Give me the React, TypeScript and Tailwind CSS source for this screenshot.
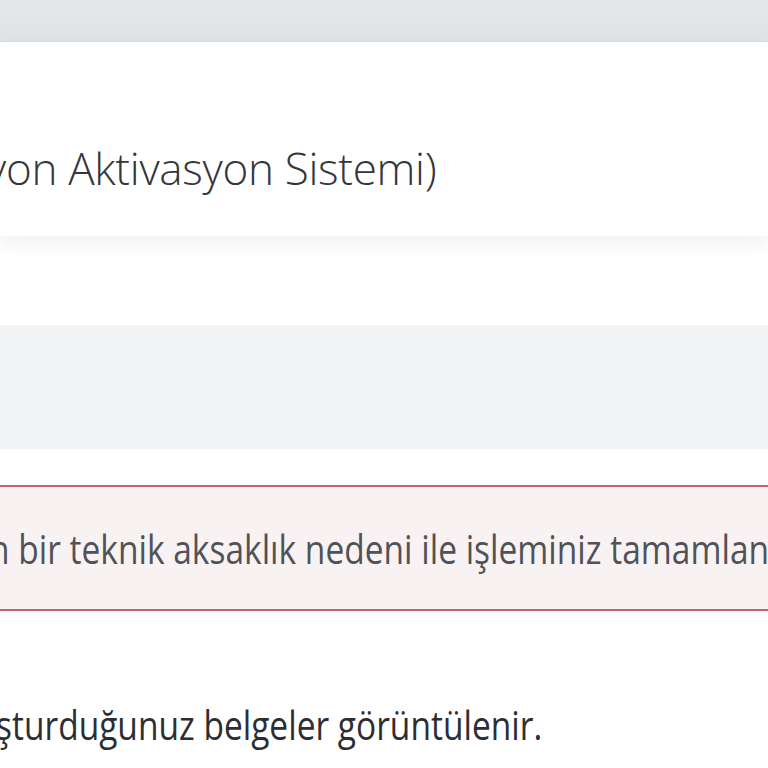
import React from 'react';

// Sayfanın kırpılmış görünümü: üst bar, başlık paneli, gri alan, hata kutusu, açıklama
export default function App() {
  return (
    <div className="w-[768px] h-[768px] overflow-hidden bg-white" style={{ fontFamily: '"Open Sans", "Noto Sans", sans-serif' }}>
      <div className="h-[42px] bg-gradient-to-b from-[#e6e9ec] to-[#dde1e4] border-b border-[#d6dadd]" />

      <div className="h-[194px] bg-white shadow-[0_10px_18px_rgba(0,0,0,0.05)] pt-[93px]">
        <h1 className="ml-[-14px] whitespace-nowrap text-[44px] leading-[66px] font-light text-[#33363b] tracking-[-0.3px]">
          yon Aktivasyon Sistemi)
        </h1>
      </div>

      <div className="h-[89px]" />
      <div className="h-[124px] bg-[#f3f4f6]" />
      <div className="h-[36px]" />

      <div className="h-[126px] bg-[#f9f2f2] border-y-2 border-[#c2636b] flex items-center">
        <p className="ml-[-11px] whitespace-nowrap text-[33.5px] leading-[50px] scale-y-[1.2] text-[#4f5258]">
          n bir teknik aksaklık nedeni ile işleminiz tamamlanamamıştır.
        </p>
      </div>

      <div className="pt-[88px]">
        <p className="ml-[-4px] whitespace-nowrap text-[33.5px] leading-[50px] scale-y-[1.2] text-[#2c2e33]">
          şturduğunuz belgeler görüntülenir.
        </p>
      </div>
    </div>
  );
}
